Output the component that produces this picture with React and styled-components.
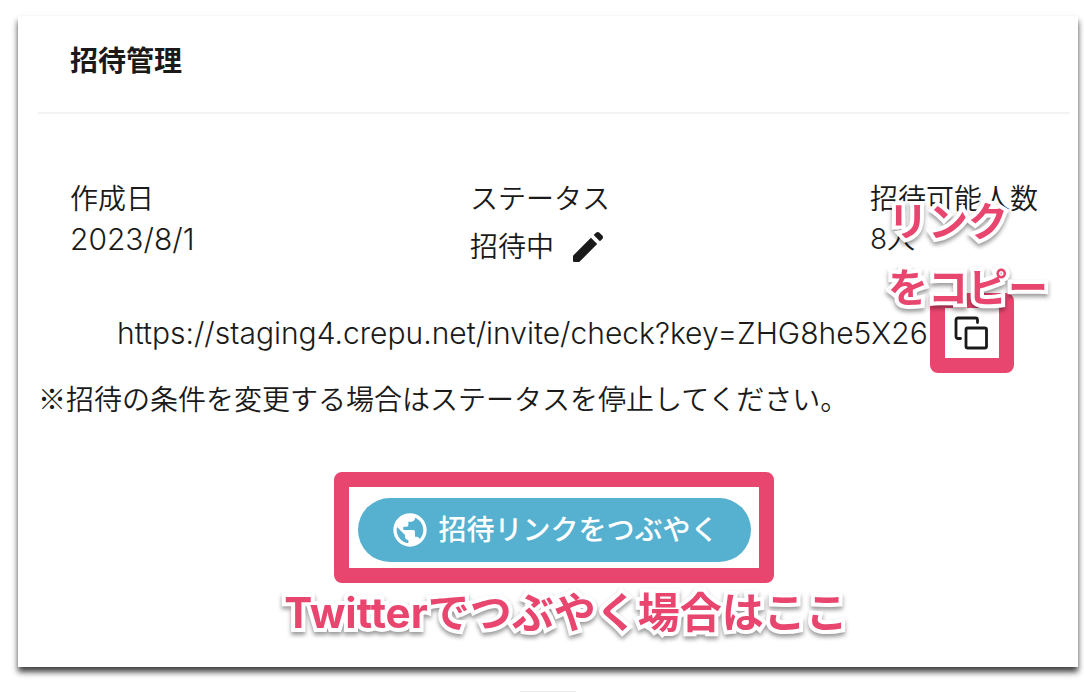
import React from 'react';
import styled, { createGlobalStyle } from 'styled-components';
import { MdPublic } from 'react-icons/md';

const App = () => {
  return (
    <Page>
      <GlobalStyle />
      <Card>
        <Header>
          <Title>招待管理</Title>
        </Header>
        <Details>
          <Detail>
            <Term>作成日</Term>
            <DateValue>2023/8/1</DateValue>
          </Detail>
          <Detail>
            <Term>ステータス</Term>
            <StatusValue>
              招待中
              <IconButton type="button" aria-label="ステータスを編集">
                <PencilIcon />
              </IconButton>
            </StatusValue>
          </Detail>
          <Detail>
            <Term>招待可能人数</Term>
            <Value>8人</Value>
          </Detail>
        </Details>
        <LinkRow>
          <LinkText>https://staging4.crepu.net/invite/check?key=ZHG8he5X26</LinkText>
          <CopyArea>
            <IconButton type="button" aria-label="リンクをコピー">
              <CopyIcon />
            </IconButton>
            <CopyFrame />
            <CopyCallout>
              リンク
              <br />
              をコピー
            </CopyCallout>
          </CopyArea>
        </LinkRow>
        <Note>※招待の条件を変更する場合はステータスを停止してください。</Note>
        <TweetArea>
          <TweetFrame>
            <TweetButton type="button">
              <MdPublic size={40} />
              招待リンクをつぶやく
            </TweetButton>
          </TweetFrame>
          <TweetCallout>Twitterでつぶやく場合はここ</TweetCallout>
        </TweetArea>
      </Card>
      <PageHandle />
    </Page>
  );
};

const PencilIcon = () => (
  <svg width="40" height="40" viewBox="0 0 24 24" fill="currentColor">
    <path d="M3 17.46v2.74c0 .44.36.8.8.8h2.74c.13 0 .26-.05.35-.15L17.5 10.25l-3.75-3.75L3.15 17.1c-.1.1-.15.22-.15.36z" />
    <path d="M20.55 7.2c.6-.6.6-1.5 0-2.1l-1.65-1.65c-.6-.6-1.5-.6-2.1 0l-1.4 1.4 3.75 3.75z" />
  </svg>
);

const CopyIcon = () => (
  <svg width="40" height="40" viewBox="0 0 40 40" fill="none" stroke="currentColor" strokeWidth="2.8" strokeLinecap="round" strokeLinejoin="round">
    <rect x="14" y="15" width="20.5" height="20" rx="1.8" />
    <path d="M8.5 25.5H6a2 2 0 0 1-2-2V7a2 2 0 0 1 2-2h17.5a2 2 0 0 1 2 2v2.5" />
  </svg>
);

const GlobalStyle = createGlobalStyle`
  * {
    box-sizing: border-box;
  }

  body {
    margin: 0;
    background: #fff;
    color: #1a1a1a;
    font-family: Inter, 'Noto Sans CJK JP', sans-serif;
    font-size: 28px;
    font-weight: 350;
    line-height: 40px;
  }
`;

const Page = styled.div`
  padding: 16px 6px 0 18px;
`;

const Card = styled.main`
  padding: 0 8px 24px 20px;
  background: #fff;
  box-shadow: 0 5px 6px rgba(0, 0, 0, 0.75);
`;

const Header = styled.header`
  padding: 25px 32px 31px;
  border-bottom: 2px solid #f3f3f3;
`;

const Title = styled.h1`
  margin: 0;
  font-size: 28px;
  font-weight: 700;
  line-height: 40px;
`;

const Details = styled.dl`
  display: grid;
  grid-template-columns: 2fr 2fr 1fr;
  margin: 0;
  padding: 65px 0 0 32px;
`;

const Detail = styled.div`
  white-space: nowrap;
`;

const Term = styled.dt`
  margin: 0;
`;

const Value = styled.dd`
  margin: 0;
`;

const DateValue = styled(Value)`
  font-size: 30px;
`;

const StatusValue = styled(Value)`
  display: flex;
  align-items: center;
  gap: 10px;
`;

const IconButton = styled.button`
  display: flex;
  align-items: center;
  justify-content: center;
  width: 48px;
  height: 56px;
  padding: 0;
  border: 0;
  background: none;
  color: #1a1a1a;
  cursor: pointer;
`;

const LinkRow = styled.div`
  display: flex;
  align-items: center;
  margin-top: 30px;
  padding: 0 74px 0 79px;
`;

const LinkText = styled.span`
  flex: 1;
  min-width: 0;
  font-size: 30px;
  white-space: nowrap;
`;

const CopyArea = styled.div`
  position: relative;
`;

const CopyFrame = styled.div`
  position: absolute;
  inset: -12px -18px;
  border: 15px solid #e9466f;
  border-radius: 8px;
  pointer-events: none;
`;

const Callout = styled.p`
  margin: 0;
  color: #e9466f;
  font-size: 42px;
  font-weight: 700;
  line-height: 60px;
  white-space: nowrap;
  -webkit-text-stroke: 8px #fff;
  paint-order: stroke fill;
  filter: drop-shadow(0 3px 2px rgba(0, 0, 0, 0.4));
`;

const CopyCallout = styled(Callout)`
  position: absolute;
  right: -52px;
  bottom: 40px;
  font-size: 40px;
  line-height: 66px;
`;

const TweetCallout = styled(Callout)`
  padding-left: 24px;
`;

const Note = styled.p`
  margin: 17px 0 0;
  font-family: 'Noto Sans CJK JP', sans-serif;
`;

const TweetArea = styled.section`
  display: flex;
  flex-direction: column;
  align-items: center;
  margin-top: 54px;
`;

const TweetFrame = styled.div`
  padding: 11px 8px 6px 9px;
  border: 15px solid #e9466f;
  border-radius: 8px;
`;

const TweetButton = styled.button`
  display: flex;
  align-items: center;
  gap: 8px;
  height: 64px;
  padding: 0 32px;
  border: 0;
  border-radius: 32px;
  background: #56b1d0;
  color: #fff;
  font: inherit;
  font-weight: 500;
  cursor: pointer;
`;

const PageHandle = styled.hr`
  width: 56px;
  margin: 24px auto 0;
  border: 0;
  border-top: 1px solid #e8e8e8;
`;

export default App;
